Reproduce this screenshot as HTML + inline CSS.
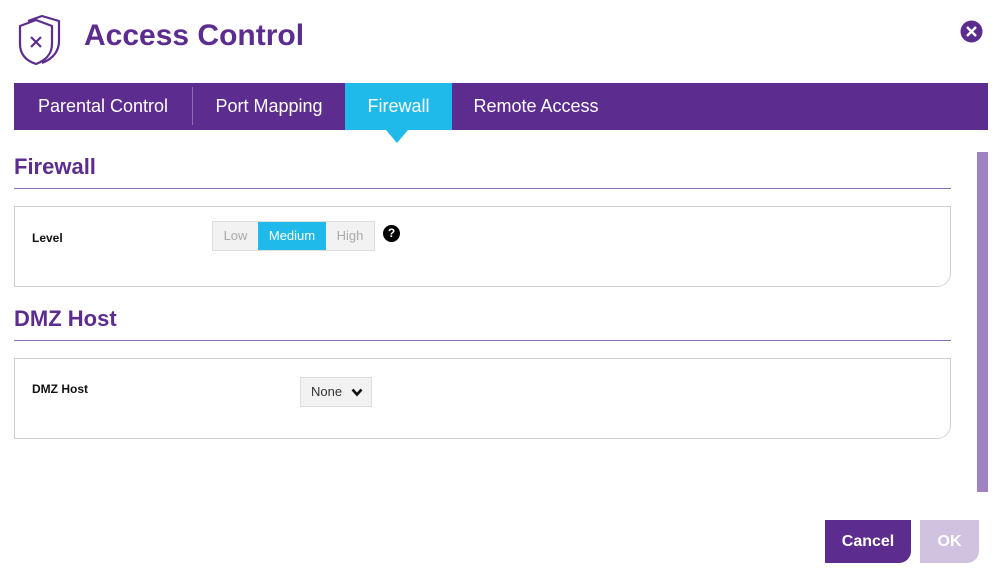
<!DOCTYPE html>
<html><head><style>
body{margin:0;width:1000px;height:572px;background:#fff;font-family:"Liberation Sans",sans-serif;position:relative;overflow:hidden}
.a{position:absolute}
.tab{position:absolute;top:83px;height:47px;line-height:47px;color:#fff;font-size:18px;text-align:center}
h2{position:absolute;margin:0;font-size:22px;color:#5c2d8e;font-weight:bold;left:14px}
.line{position:absolute;left:14px;width:937px;height:1px;background:#8e6bb5}
.box{position:absolute;left:14px;width:935px;border:1px solid #d0d0d0;border-radius:0 0 14px 0}
.lbl{position:absolute;font-size:12px;font-weight:bold;color:#111}
</style></head><body>
<svg class="a" style="left:18px;top:14px" width="44" height="52" viewBox="0 0 44 52" fill="none" stroke="#5c2d8e" stroke-width="2.2" stroke-linejoin="round">
<path d="M10 7 L24 2 L41 7 L41 27 C41 38 34 45 24 49"/>
<path d="M2 12 L18 6 L34 12 L34 30 C34 41 26 47 18 50 C9 47 2 41 2 30 Z"/>
<path d="M13 23 L23 33 M23 23 L13 33"/>
</svg>
<div class="a" style="left:84px;top:19px;font-size:30px;font-weight:bold;color:#5c2d8e">Access Control</div>
<svg class="a" style="left:960px;top:20px" width="23" height="23" viewBox="0 0 23 23"><circle cx="11.5" cy="11.5" r="11" fill="#5c2d8e"/><path d="M7 7L16 16M16 7L7 16" stroke="#fff" stroke-width="2.4"/></svg>
<div class="a" style="left:14px;top:83px;width:974px;height:47px;background:#5c2d8e"></div>
<div class="a" style="left:192px;top:87px;width:1px;height:38px;background:#8e6bb5"></div>
<div class="tab" style="left:14px;width:178px">Parental Control</div>
<div class="tab" style="left:193px;width:152px">Port Mapping</div>
<div class="tab" style="left:345px;width:107px;background:#1fbaea">Firewall</div>
<div class="a" style="left:386px;top:130px;width:0;height:0;border-left:11px solid transparent;border-right:11px solid transparent;border-top:13px solid #1fbaea"></div>
<div class="tab" style="left:452px;width:168px">Remote Access</div>
<div class="a" style="left:977px;top:152px;width:11px;height:340px;background:#9f83c0"></div>
<h2 style="top:154px">Firewall</h2>
<div class="line" style="top:188px"></div>
<div class="box" style="top:206px;height:79px"></div>
<div class="lbl" style="left:32px;top:231px">Level</div>
<div class="a" style="left:212px;top:221px;height:28px;display:flex;font-size:13px;line-height:28px;border:1px solid #ddd;background:#f2f2f2">
<span style="width:45px;text-align:center;color:#aaa">Low</span>
<span style="width:68px;text-align:center;color:#fff;background:#1fbaea">Medium</span>
<span style="width:48px;text-align:center;color:#aaa">High</span></div>
<div class="a" style="left:383px;top:225px;width:17px;height:17px;border-radius:50%;background:#000;color:#fff;font-size:12px;font-weight:bold;text-align:center;line-height:17px">?</div>
<h2 style="top:306px">DMZ Host</h2>
<div class="line" style="top:340px"></div>
<div class="box" style="top:358px;height:79px"></div>
<div class="lbl" style="left:32px;top:382px">DMZ Host</div>
<div class="a" style="left:300px;top:377px;width:70px;height:28px;border:1px solid #ddd;background:#f2f2f2;font-size:13px;line-height:28px;color:#333"><span style="margin-left:10px">None</span>
<svg class="a" style="left:50px;top:10px" width="12" height="9" viewBox="0 0 12 9"><path d="M1.5 1.5L6 6.5L10.5 1.5" stroke="#111" stroke-width="2.6" fill="none"/></svg></div>
<div class="a" style="left:825px;top:520px;width:86px;height:43px;background:#5c2d8e;border-radius:0 0 12px 0;color:#fff;font-weight:bold;font-size:16px;text-align:center;line-height:43px">Cancel</div>
<div class="a" style="left:920px;top:520px;width:59px;height:43px;background:#d0c3e0;border-radius:0 0 12px 0;color:#fff;font-weight:bold;font-size:16px;text-align:center;line-height:43px">OK</div>
</body></html>
